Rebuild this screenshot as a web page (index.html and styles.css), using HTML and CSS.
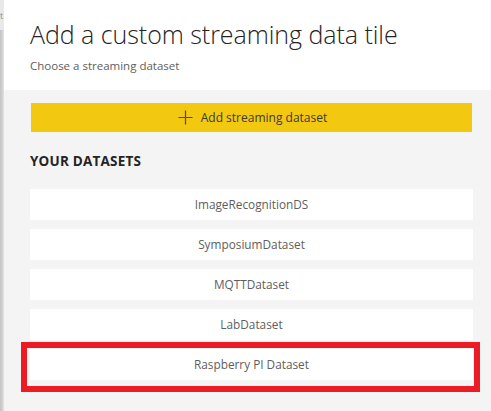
FILE: index.html
```html
<!DOCTYPE html>
<html>
<head>
<meta charset="utf-8">
<link rel="stylesheet" href="styles.css">
</head>
<body>
<div class="page">
  <div class="edge">
    <div class="edge-top">t</div>
    <div class="edge-shadow"></div>
  </div>
  <div class="panel">
    <header class="head">
      <h1 class="title">Add a custom streaming data tile</h1>
      <p class="subtitle">Choose a streaming dataset</p>
    </header>
    <main class="body">
      <button class="add-btn">
        <svg class="plus" width="15" height="15" viewBox="0 0 15 15"><path d="M7.5 0.5V14.5M0.5 7.5H14.5" stroke="#5c4a0a" stroke-width="1.2" fill="none"/></svg>
        <span>Add streaming dataset</span>
      </button>
      <h2 class="section">YOUR DATASETS</h2>
      <ul class="list">
        <li class="item">ImageRecognitionDS</li>
        <li class="item">SymposiumDataset</li>
        <li class="item">MQTTDataset</li>
        <li class="item">LabDataset</li>
        <li class="item highlighted">Raspberry PI Dataset<span class="mark"></span></li>
      </ul>
    </main>
  </div>
</div>
</body>
</html>
```
FILE: styles.css
```css
html, body {
  margin: 0;
  padding: 0;
  height: 100%;
  background: #f4f4f4;
  overflow: hidden;
}
.page {
  display: flex;
  height: 411px;
  font-family: "Open Sans", "Noto Sans", sans-serif;
}
.edge {
  width: 4px;
  display: flex;
  flex-direction: column;
  overflow: hidden;
}
.edge-top {
  height: 30px;
  background: #e9e9e9;
  color: #8a8a8a;
  font-size: 9px;
  line-height: 12px;
  padding-top: 10px;
  box-sizing: border-box;
}
.edge-shadow {
  flex: 1;
  background: linear-gradient(to right, #c4c4c4, #d2d2d2 60%, #e6e6e6);
}
.panel {
  flex: 1;
  display: flex;
  flex-direction: column;
}
.head {
  background: #ffffff;
  height: 90px;
  box-sizing: border-box;
  padding: 17px 0 0 26px;
}
.title {
  margin: 0;
  font-weight: 300;
  font-size: 25px;
  line-height: 34px;
  color: #252423;
  letter-spacing: -0.05px;
}
.subtitle {
  margin: 7px 0 0;
  font-size: 11.5px;
  line-height: 16px;
  color: #605e5c;
}
.body {
  padding: 13px 18px 0 26px;
}
.add-btn {
  display: flex;
  align-items: center;
  justify-content: center;
  gap: 8px;
  width: 441px;
  height: 29px;
  margin-left: 1px;
  border: none;
  background: #f2c811;
  font-family: inherit;
  font-size: 12px;
  color: #3b3a39;
  padding: 0 0 0 2px;
}
.plus {
  display: block;
}
.section {
  margin: 21px 0 0;
  font-size: 13.5px;
  font-weight: 700;
  line-height: 17px;
  color: #252423;
  letter-spacing: 0.2px;
}
.list {
  list-style: none;
  margin: 19px 0 0;
  padding: 0;
  display: flex;
  flex-direction: column;
  gap: 9px;
}
.item {
  position: relative;
  background: #ffffff;
  height: 31px;
  line-height: 31px;
  text-align: center;
  font-size: 11.8px;
  color: #605e5c;
}
.highlighted .mark {
  position: absolute;
  left: -9px;
  top: -7px;
  width: 459px;
  height: 50px;
  box-sizing: border-box;
  border: 6px solid #ed1c24;
}
```
